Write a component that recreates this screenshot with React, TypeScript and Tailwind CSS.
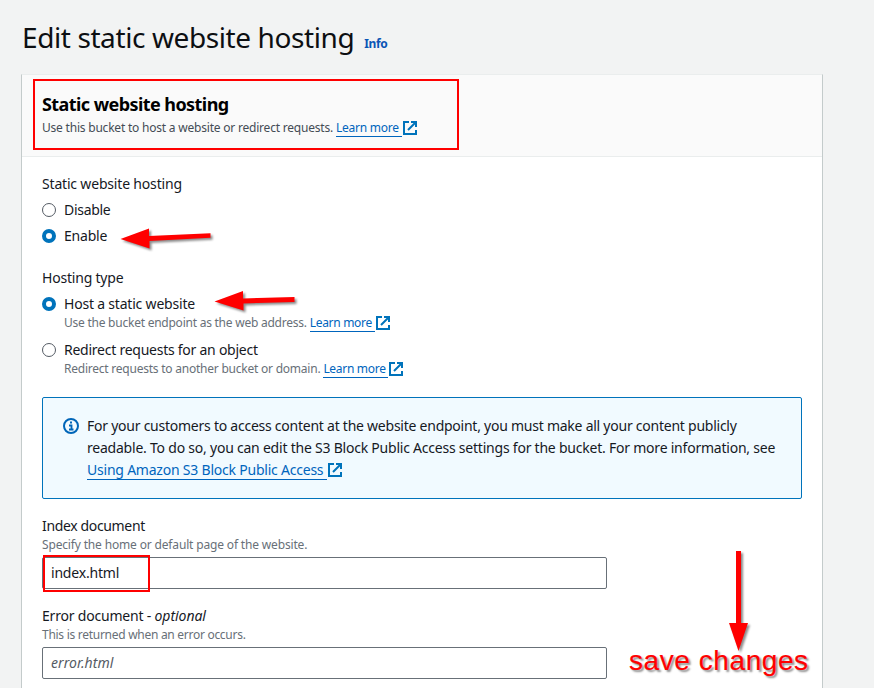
import React from "react";

function ExternalIcon({ className = "" }: { className?: string }) {
  return (
    <svg className={`h-[14px] w-[14px] shrink-0 ${className}`} viewBox="0 0 14 14" fill="none" stroke="#0073bb" strokeWidth="2">
      <path d="M6 1H1V13H13V9" />
      <path d="M8 1H13V6M13 1L5 9" />
    </svg>
  );
}

function Link({ children, className = "" }: { children: React.ReactNode; className?: string }) {
  return (
    <a className="inline-flex items-center text-[#0065bd]">
      <span className={`whitespace-pre border-b border-[#0065bd] ${className}`}>{children}</span>
      <ExternalIcon className="ml-px" />
    </a>
  );
}

function Radio({ checked = false }: { checked?: boolean }) {
  return checked ? (
    <span className="h-[14px] w-[14px] shrink-0 rounded-full border-4 border-[#0073bb] bg-white" />
  ) : (
    <span className="h-[14px] w-[14px] shrink-0 rounded-full border border-[#545b64] bg-white" />
  );
}

function Option({ label, checked, className }: { label: string; checked?: boolean; className: string }) {
  return (
    <label className="flex h-[22px] items-center gap-2">
      <Radio checked={checked} />
      <span className={className}>{label}</span>
    </label>
  );
}

export default function App() {
  return (
    <div className="relative h-[688px] w-[874px] overflow-hidden bg-[#f2f3f3] font-['Noto_Sans','Open_Sans',sans-serif] text-[14px] leading-[22px] whitespace-nowrap text-[#16191f]">
      <header className="flex h-[74px] items-baseline pt-[19px] pl-[22px]">
        <h1 className="text-[28px] leading-[36px] tracking-[-0.4px] text-[#0d0f12]">Edit static website hosting</h1>
        <a className="ml-[10px] text-[12px] font-bold tracking-[-0.4px] text-[#0a55b5]">Info</a>
      </header>

      <main className="ml-[21px] h-[640px] w-[802px] border border-[#c4cbcb] border-t-[#eaeded] bg-white">
        <div className="h-[82px] border-b border-[#eaeded] bg-[#fafafa] pt-[18px] pl-5">
          <h2 className="text-[18px] leading-[22px] font-bold tracking-[-0.57px] text-black">Static website hosting</h2>
          <div className="mt-[4px] flex h-[18px] items-center text-[12px] leading-[16px] text-[#444c55]">
            <span className="mr-[3px] tracking-[-0.21px]">Use this bucket to host a website or redirect requests.</span>
            <Link className="tracking-[-0.25px]">{"Learn more "}</Link>
          </div>
        </div>

        <div className="px-5 pt-4">
          <div className="tracking-[-0.18px]">Static website hosting</div>
          <div className="mt-1 flex flex-col gap-1">
            <Option label="Disable" className="tracking-[-0.3px]" />
            <Option label="Enable" checked className="tracking-[-0.2px]" />
          </div>

          <div className="mt-5 tracking-[-0.2px]">Hosting type</div>
          <div className="mt-1">
            <Option label="Host a static website" checked className="tracking-[-0.2px]" />
            <div className="-mt-px ml-[22px] flex h-[18px] items-center text-[12px] leading-[16px] text-[#687078]">
              <span className="mr-[3px] tracking-[-0.24px]">Use the bucket endpoint as the web address.</span>
              <Link className="tracking-[-0.3px]">{"Learn more "}</Link>
            </div>
          </div>
          <div className="mt-[7px]">
            <Option label="Redirect requests for an object" className="tracking-[-0.25px]" />
            <div className="-mt-px ml-[22px] flex h-[18px] items-center text-[12px] leading-[16px] text-[#687078]">
              <span className="mr-[3px] tracking-[-0.23px]">Redirect requests to another bucket or domain.</span>
              <Link className="tracking-[-0.3px]">{"Learn more "}</Link>
            </div>
          </div>

          <div className="mt-[19px] flex h-[102px] w-[760px] rounded-[2px] border border-[#0073bb] bg-[#f1faff] pt-[17px] pl-5">
            <svg className="mt-[3px] mr-2 h-4 w-4 shrink-0" viewBox="0 0 16 16" fill="none" stroke="#0065b8" strokeWidth="2">
              <circle cx="8" cy="8" r="7" />
              <path d="M6 7.5H8.5V11M6 11.5H10.5M7 4.5H9" strokeWidth="1.8" />
            </svg>
            <div>
              <div className="tracking-[-0.245px]">For your customers to access content at the website endpoint, you must make all your content publicly</div>
              <div className="tracking-[-0.223px]">readable. To do so, you can edit the S3 Block Public Access settings for the bucket. For more information, see</div>
              <div className="flex h-[22px] items-center leading-[18px]">
                <Link className="tracking-[-0.22px]">{"Using Amazon S3 Block Public Access "}</Link>
              </div>
            </div>
          </div>

          <div className="mt-4 tracking-[-0.35px]">Index document</div>
          <div className="h-5 text-[12px] leading-[16px] tracking-[-0.16px] text-[#687078]">Specify the home or default page of the website.</div>
          <div className="relative flex h-8 w-[565px] items-center rounded-[2px] border border-[#687078] pl-2 tracking-[-0.2px]">
            index.html
            <div className="absolute top-[-3px] left-0 h-[37px] w-[107px] border-2 border-[#ff0000]" />
          </div>

          <div className="mt-4 tracking-[-0.2px]">Error document - <i className="tracking-[-0.05px]">optional</i></div>
          <div className="h-5 text-[12px] leading-[16px] tracking-[-0.28px] text-[#687078]">This is returned when an error occurs.</div>
          <div className="flex h-8 w-[565px] items-center rounded-[2px] border border-[#687078] pl-2 tracking-[0.06px] text-[#545b64] italic">
            error.html
          </div>
        </div>
      </main>

      <div className="absolute top-[79px] left-[33px] h-[71px] w-[426px] border-2 border-[#ff0000]" />
      <svg className="absolute top-0 left-0 h-[688px] w-[874px] drop-shadow-[2px_2px_1px_rgba(0,0,0,0.45)]" viewBox="0 0 874 688" fill="#ff0000">
        <path d="M120.500 239L149 228.500V236L210.500 233.200V237.800L149.500 241V248.500Z" />
        <path d="M214.500 301.500L243 291V298.500L294.500 297V302L243.500 303.500V310.500Z" />
        <path d="M736 551H741V623H748L738.500 651L729 623H736Z" />
      </svg>
      <div className="absolute top-[644px] left-[629px] font-['Liberation_Sans',Arial,sans-serif] text-[28px] leading-[34px] tracking-[0.57px] text-[#ff0000] [-webkit-text-stroke:0.15px_#ff0000] [text-shadow:2px_2px_2px_rgba(0,0,0,0.45)]">save changes</div>
    </div>
  );
}
